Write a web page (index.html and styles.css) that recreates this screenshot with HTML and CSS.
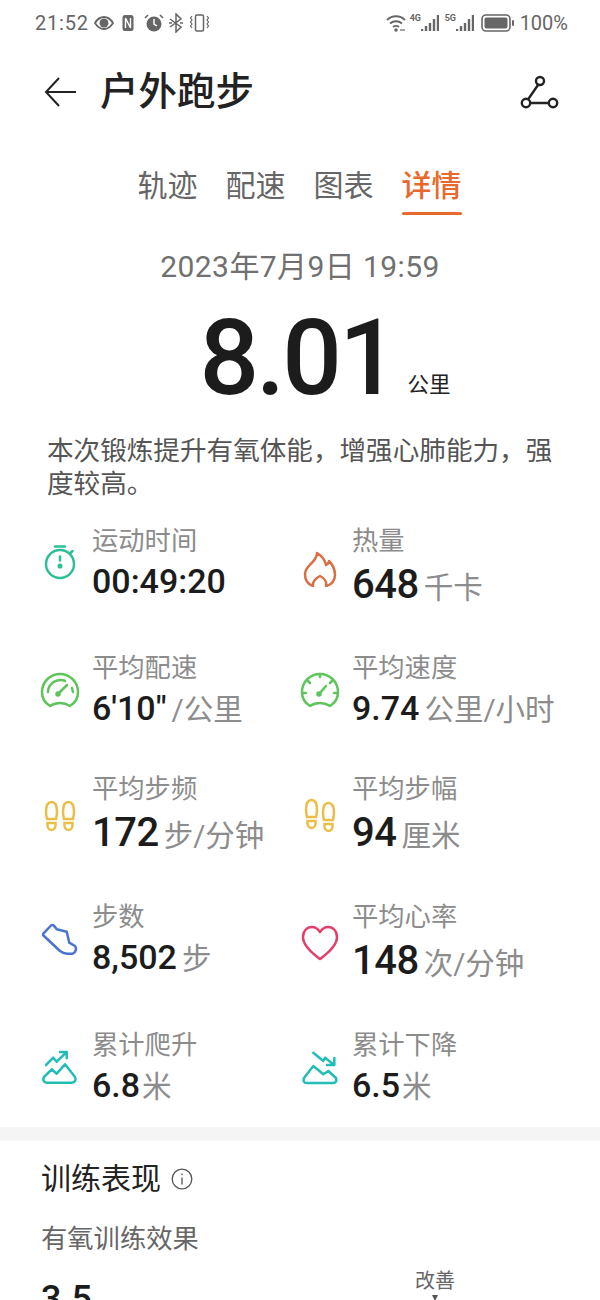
FILE: index.html
```html
<!DOCTYPE html>
<html lang="zh-CN">
<head>
  <meta charset="UTF-8">
  <title>户外跑步</title>
  <link rel="stylesheet" href="styles.css">
</head>
<body>
  <div class="status-bar">
    <div class="status-left">
      <span class="status-time">21:52</span>
      <svg class="si" width="20" height="20" viewBox="0 0 20 20"><path d="M1 10C4 5 7 4 10 4s6 1 9 6c-3 5-6 6-9 6s-6-1-9-6z" fill="none" stroke="#666" stroke-width="1.8"/><circle cx="10" cy="10" r="4.5" fill="#666"/></svg>
      <svg class="si si-n" width="12" height="18" viewBox="0 0 12 18"><rect x="0.5" y="1" width="11" height="16" rx="2.5" fill="#666"/><path d="M3.5 14V4l5 10V4" fill="none" stroke="#fff" stroke-width="1.4"/></svg>
      <svg class="si si-alarm" width="20" height="20" viewBox="0 0 20 20"><circle cx="10" cy="11" r="7.5" fill="#666"/><path d="M10 6v5l3 2" fill="none" stroke="#fff" stroke-width="1.5"/><path d="M1 5l3-3M19 5l-3-3" stroke="#666" stroke-width="1.6"/></svg>
      <svg class="si si-bt" width="14" height="20" viewBox="0 0 14 20"><path d="M1 6l11 8-5 5V1l5 5L1 14" fill="none" stroke="#666" stroke-width="1.5"/><path d="M0 10h3M11 10h3" stroke="#666" stroke-width="1.5"/></svg>
      <svg class="si si-vib" width="21" height="20" viewBox="0 0 21 20"><rect x="6.5" y="2" width="8" height="16" rx="1.5" fill="none" stroke="#666" stroke-width="1.5"/><path d="M3 3l-1.500 2 1.500 2-1.500 2 1.500 2-1.500 2 1.500 2M18 3l1.500 2-1.500 2 1.500 2-1.500 2 1.500 2-1.500 2" fill="none" stroke="#666" stroke-width="1.2"/></svg>
    </div>
    <div class="status-right">
      <svg class="si" width="20" height="18" viewBox="0 0 20 18"><path d="M1 6c5-5 13-5 18 0M4 9.500c3.500-3 8.500-3 12 0M7 13c2-1.500 4-1.500 6 0" fill="none" stroke="#666" stroke-width="1.800"/><circle cx="10" cy="16" r="1.800" fill="#666"/><path d="M14 16h5" stroke="#666" stroke-width="1.200"/></svg>
      <span class="net"><span class="net-tag">4G</span><svg width="18" height="18" viewBox="0 0 18 18"><path d="M1 15v2M5 12v5M9 9v8M13 5v12M17 1v16" stroke="#666" stroke-width="2.400"/></svg></span>
      <span class="net net-5g"><span class="net-tag">5G</span><svg width="18" height="18" viewBox="0 0 18 18"><path d="M1 15v2M5 12v5M9 9v8M13 5v12M17 1v16" stroke="#666" stroke-width="2.400"/></svg></span>
      <svg class="si si-batt" width="34" height="18" viewBox="0 0 34 18"><rect x="1" y="1" width="28" height="16" rx="4" fill="none" stroke="#666" stroke-width="1.600"/><rect x="3.500" y="3.500" width="23" height="11" rx="2" fill="#666"/><rect x="31" y="6" width="2" height="6" rx="1" fill="#666"/></svg>
      <span class="status-pct">100%</span>
    </div>
  </div>

  <div class="app-header">
    <svg class="back" width="33" height="32" viewBox="0 0 33 32"><path d="M32 16H2M15 2L2 16l13 14" fill="none" stroke="#222" stroke-width="2"/></svg>
    <h1>户外跑步</h1>
    <svg class="route" width="40" height="36" viewBox="0 0 40 36"><circle cx="20" cy="7" r="4" fill="none" stroke="#222" stroke-width="2.400"/><circle cx="6" cy="29" r="4.200" fill="none" stroke="#222" stroke-width="2.400"/><circle cx="33" cy="29" r="4.200" fill="none" stroke="#222" stroke-width="2.400"/><path d="M18 11L8 25.500M10.500 29h18" stroke="#222" stroke-width="2.400"/></svg>
  </div>

  <div class="tabs">
    <span class="tab">轨迹</span>
    <span class="tab">配速</span>
    <span class="tab">图表</span>
    <span class="tab active">详情</span>
  </div>

  <div class="date">2023年7月9日 19:59</div>
  <div class="distance"><span class="distance-num">8.01</span><span class="distance-unit">公里</span></div>
  <p class="summary">本次锻炼提升有氧体能，增强心肺能力，强度较高。</p>

  <div class="stats">
    <div class="stat">
      <svg class="stat-icon" width="40" height="40" viewBox="0 0 40 40" fill="none" stroke="#2fbf98" stroke-width="2.500" stroke-linecap="round"><circle cx="20" cy="21" r="14"/><path d="M15 3.500h10M30 10.500l2.500-2.500M20 13.500v4"/><circle cx="20" cy="23" r="1.300"/></svg>
      <div><div class="stat-label">运动时间</div><div class="stat-value">00:49:20</div></div>
    </div>
    <div class="stat">
      <svg class="stat-icon" width="40" height="40" viewBox="0 0 40 40" fill="none" stroke="#d96f44" stroke-width="2.500" stroke-linejoin="round"><path d="M13 39C7 37 5 32 5 27 5 20 12 17 15 12 17 9 17 7 17 6 22 9 25 13 26 18 28 17 29 15 29 14 33 18 35 23 35 28 35 33 32 38 26 39 27 35 24 31 20 29 16 31 12 35 13 39Z"/></svg>
      <div><div class="stat-label">热量</div><div class="stat-value low">648<span class="unit">千卡</span></div></div>
    </div>

    <div class="stat">
      <svg class="stat-icon" width="40" height="40" viewBox="0 0 40 40" fill="none" stroke="#5ec45b" stroke-width="2.500" stroke-linecap="round" stroke-linejoin="round"><path d="M10 35C5 32 2 27 2 21 2 11 10 3 20 3s18 8 18 18c0 6-3 11-8 14-6-4-14-4-20 0Z"/><path d="M8 21C8 14 14 9 21 9c2 0 3 0 4 1M32 17l1 4M18 23l9-9"/><circle cx="18" cy="23" r="1.500"/></svg>
      <div><div class="stat-label">平均配速</div><div class="stat-value">6'10"<span class="unit">/公里</span></div></div>
    </div>
    <div class="stat">
      <svg class="stat-icon" width="40" height="40" viewBox="0 0 40 40" fill="none" stroke="#5ec45b" stroke-width="2.500" stroke-linecap="round" stroke-linejoin="round"><path d="M10 35C5 32 2 27 2 21 2 11 10 3 20 3s18 8 18 18c0 6-3 11-8 14-6-4-14-4-20 0Z"/><path d="M20 3v3M8 10l2 2M32 10l-2 2M3 22h3M34 22h3M19 23l7-8"/><circle cx="19" cy="23" r="1.500"/></svg>
      <div><div class="stat-label">平均速度</div><div class="stat-value">9.74<span class="unit">公里/小时</span></div></div>
    </div>

    <div class="stat">
      <svg class="stat-icon" width="40" height="40" viewBox="0 0 40 40" fill="none" stroke="#eabf47" stroke-width="2.500"><path d="M6 17c0-5 1.500-10 5.500-10S17 12 17 17c0 3-.500 5-1 7H7c-.500-2-1-4-1-7ZM7.500 28h8c.500 4-1 7-4 7s-4.500-3-4-7Z"/><path d="M23 17c0-5 1.500-10 5.500-10S34 12 34 17c0 3-.500 5-1 7h-9c-.500-2-1-4-1-7ZM24.500 28h8c.500 4-1 7-4 7s-4.500-3-4-7Z"/></svg>
      <div><div class="stat-label">平均步频</div><div class="stat-value low">172<span class="unit">步/分钟</span></div></div>
    </div>
    <div class="stat">
      <svg class="stat-icon" width="40" height="40" viewBox="0 0 40 40" fill="none" stroke="#eabf47" stroke-width="2.500"><path d="M6 15c0-5 1.500-10 5.500-10S17 10 17 15c0 3-.500 5-1 7H7c-.500-2-1-4-1-7ZM7.500 26h8c.500 4-1 7-4 7s-4.500-3-4-7Z"/><path d="M23 18c0-5 1.500-10 5.500-10S34 13 34 18c0 3-.500 5-1 7h-9c-.500-2-1-4-1-7ZM24.500 29h8c.500 4-1 7-4 7s-4.500-3-4-7Z"/></svg>
      <div><div class="stat-label">平均步幅</div><div class="stat-value low">94<span class="unit">厘米</span></div></div>
    </div>

    <div class="stat">
      <svg class="stat-icon" width="40" height="40" viewBox="0 0 40 40" fill="none" stroke="#4a72cf" stroke-width="2.500" stroke-linejoin="round"><path d="M3.300 13.700 11 5.500C12.500 4.500 14 5 16.700 9.300L26.700 11.700 29.300 22.700 35 26C36.500 28 36.500 32 32.700 33.700H27C24 33.700 22 32.500 20 31L4 16C3 15.500 3 14.500 3.300 13.700Z"/></svg>
      <div><div class="stat-label">步数</div><div class="stat-value">8,502<span class="unit">步</span></div></div>
    </div>
    <div class="stat">
      <svg class="stat-icon" width="40" height="40" viewBox="0 0 40 40" fill="none" stroke="#e0406a" stroke-width="2.500" stroke-linejoin="round"><path d="M20 36C16 33 3 24 3 14 3 8 7 4 12 4c4 0 6 2 8 5 2-3 4-5 8-5 5 0 9 4 9 10 0 10-13 19-17 22Z"/></svg>
      <div><div class="stat-label">平均心率</div><div class="stat-value low">148<span class="unit">次/分钟</span></div></div>
    </div>

    <div class="stat">
      <svg class="stat-icon" width="40" height="40" viewBox="0 0 40 40" fill="none" stroke="#23bdb7" stroke-width="2.500" stroke-linecap="round" stroke-linejoin="round"><path d="M4 29 11.700 21.300 16.700 25.700 25 16.300 35 29C36.500 32 35 34.700 31.700 34.700H6.700C3.500 34.700 2.500 31.500 4 29Z"/><path d="M6 17 13.300 9.700 16.700 13.700 26 4.700M20 4h6.700v6.300"/></svg>
      <div><div class="stat-label">累计爬升</div><div class="stat-value">6.8<span class="unit tight">米</span></div></div>
    </div>
    <div class="stat">
      <svg class="stat-icon" width="40" height="40" viewBox="0 0 40 40" fill="none" stroke="#23bdb7" stroke-width="2.500" stroke-linecap="round" stroke-linejoin="round"><path d="M4 30 13.300 18 23.300 26.300 28.300 23 36 30C37 33 36 35 33 35H7C3.500 35 3 32.500 4 30Z"/><path d="M13.300 4.700 23.300 13 25 9.700 34.300 17M34.300 10v7H27"/></svg>
      <div><div class="stat-label">累计下降</div><div class="stat-value">6.5<span class="unit tight">米</span></div></div>
    </div>
  </div>

  <div class="divider"></div>

  <section class="training">
    <div class="training-title">
      <h2>训练表现</h2>
      <svg width="22" height="22" viewBox="0 0 22 22" fill="none" stroke="#555" stroke-width="1.300"><circle cx="11" cy="11" r="9.800"/><path d="M11 9.500v7M11 5.500v1.800"/></svg>
    </div>
    <div class="training-label">有氧训练效果</div>
    <div class="training-row">
      <span class="training-num">3.5</span>
      <div class="marker">改善<i class="marker-arrow"></i></div>
    </div>
  </section>
</body>
</html>
```

FILE: styles.css
```css
html, body { height: 1300px; overflow: hidden; }
body { margin: 0; background: #fff; color: #1c1c1c; font-family: Roboto, "Noto Sans CJK SC", sans-serif; }
svg { display: block; flex: none; }

.status-bar { height: 46px; padding: 0 32px 0 35px; display: flex; justify-content: space-between; align-items: center; color: #666; font-size: 20px; }
.status-left, .status-right { display: flex; align-items: center; }
.status-time { letter-spacing: 0.8px; }
.status-left .si { margin-left: 5px; }
.status-left .si-n { margin-left: 8px; }
.status-left .si-alarm { margin-left: 10px; }
.status-left .si-vib { margin-left: 6px; }
.status-right .si-batt { margin-left: 7px; }
.status-pct { margin-left: 5px; }
.net { display: flex; align-items: flex-start; margin-left: 4px; }
.net-5g { margin-left: 6px; }
.net-tag { font-size: 9px; line-height: 10px; font-weight: 700; width: 11px; margin-top: -1px; }

.app-header { height: 92px; display: flex; align-items: center; padding: 0 40px 0 44px; }
.app-header h1 { margin: 0 0 0 23px; font-size: 38.500px; font-weight: 500; line-height: 48px; color: #222; flex: 1; }

.tabs { display: flex; justify-content: center; gap: 28px; height: 78px; padding-right: 1px; box-sizing: border-box; }
.tab { font-size: 30px; line-height: 44px; height: 78px; box-sizing: border-box; padding-top: 26px; color: #666; }
.tab.active { color: #e8692c; font-weight: 500; position: relative; }
.tab.active::after { content: ""; position: absolute; left: 0; right: 0; top: 74px; height: 3px; border-radius: 2px; background: #e8692c; }

.date { margin-top: 31px; text-align: center; font-size: 30px; line-height: 40px; letter-spacing: 0.400px; color: #707070; }

.distance { display: flex; justify-content: center; align-items: flex-end; height: 114px; margin-top: 15px; padding-left: 50px; }
.distance-num { font-size: 105px; font-weight: 500; line-height: 114px; letter-spacing: -3px; color: #1c1c1c; }
.distance-unit { font-size: 21.500px; line-height: 30px; margin: 0 0 16px 12px; color: #222; }

.summary { margin: 18px 47px 0; font-size: 26.600px; line-height: 33px; color: #555; }

.stats { margin-top: 23px; padding-left: 40px; display: grid; grid-template-columns: 260px 1fr; grid-template-rows: 127px 121px 128px 128px 100px; }
.stat { display: flex; align-items: center; align-self: start; gap: 12px; }
.stat-label { font-size: 26.300px; line-height: 36px; color: #8c8c8c; white-space: nowrap; }
.stat-value { font-size: 34px; font-weight: 500; line-height: 44px; color: #1c1c1c; white-space: nowrap; }
.stat-value.low { margin-top: 4px; font-size: 40px; letter-spacing: -0.500px; }
.unit { margin-left: 5px; font-size: 29.500px; font-weight: 400; letter-spacing: 0; color: #8c8c8c; }
.unit.tight { margin-left: 2px; }

.divider { height: 14px; background: #f5f5f5; }

.training { padding: 18px 41px 0; }
.training-title { display: flex; align-items: center; gap: 10px; height: 40px; }
.training-title h2 { margin: 0; font-size: 30px; line-height: 40px; font-weight: 400; color: #222; }
.training-label { margin-top: 22px; font-size: 26.300px; line-height: 36px; color: #666; }
.training-row { display: flex; margin-top: 17px; }
.training-num { font-size: 36px; font-weight: 500; line-height: 50px; }
.marker { margin-left: 323px; margin-top: -7px; font-size: 20px; line-height: 28px; color: #666; text-align: center; position: relative; }
.marker-arrow { display: block; width: 0; margin: 0 auto; border: 3px solid transparent; border-top: 6px solid #555; border-bottom: 0; }
```
